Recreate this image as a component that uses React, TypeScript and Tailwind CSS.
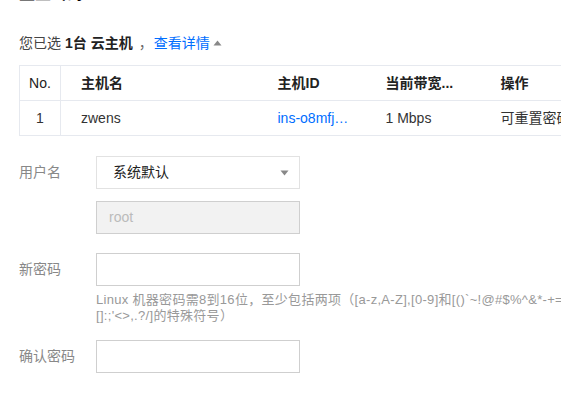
import React from "react";

const font = { fontFamily: '"Liberation Sans", "Noto Sans CJK SC", sans-serif' };

export default function App() {
  return (
    <div className="w-[561px] h-[420px] overflow-hidden bg-white text-[#333]" style={font}>
      <div className="pl-[19px]">
        <h3 className="-mt-[16px] h-[20px] text-[16px] leading-[20px] font-bold text-[#000]">重置密码</h3>

        <div className="mt-[29px] flex items-center text-[14px] leading-[20px]">
          <span className="text-[#444]">您已选</span>
          <span className="ml-[4px] font-bold text-[#222]">1台 云主机</span>
          <span className="ml-[6px] text-[#666]">，</span>
          <span className="ml-[1px] text-[#006eff]">查看详情</span>
          <svg className="ml-[3px]" width="9" height="6" viewBox="0 0 9 6">
            <path d="M4.5 0.5 L8.5 5.5 L0.5 5.5 Z" fill="#888" />
          </svg>
        </div>

        <table className="mt-[12px] w-[640px] table-fixed border-collapse border border-[#e6e9ef] text-[14px]">
          <colgroup>
            <col className="w-[41px]" />
            <col className="w-[198px]" />
            <col className="w-[108px]" />
            <col className="w-[115px]" />
            <col />
          </colgroup>
          <thead>
            <tr className="h-[35px] text-[#222]">
              <th className="border-r border-[#e6e9ef] text-center font-normal">No.</th>
              <th className="pl-[20px] text-left font-semibold">主机名</th>
              <th className="pl-[19px] text-left font-semibold">主机ID</th>
              <th className="pl-[19px] text-left font-semibold">当前带宽...</th>
              <th className="pl-[19px] text-left font-semibold">操作</th>
            </tr>
          </thead>
          <tbody>
            <tr className="h-[35px] border-t border-[#e6e9ef]">
              <td className="border-r border-[#e6e9ef] text-center">1</td>
              <td className="pl-[20px]">zwens</td>
              <td className="pl-[19px] text-[#006eff] whitespace-nowrap overflow-hidden">ins-o8mfj…</td>
              <td className="pl-[19px]">1 Mbps</td>
              <td className="pl-[19px] whitespace-nowrap">可重置密码</td>
            </tr>
          </tbody>
        </table>

        <div className="mt-[20px] flex flex-col text-[14px]">
          <div className="flex items-center">
            <label className="w-[77px] text-[#888]">用户名</label>
            <div className="w-[204px] h-[33px] border border-[#e2e2e2] flex items-center justify-between pl-[16px] pr-[10px] text-[#222]">
              <span>系统默认</span>
              <svg width="9" height="6" viewBox="0 0 9 6">
                <path d="M0.5 0.5 L8.5 0.5 L4.5 5.5 Z" fill="#888" />
              </svg>
            </div>
          </div>

          <div className="mt-[12px] flex items-center">
            <div className="w-[77px]" />
            <div className="w-[204px] h-[33px] border border-[#cfcfcf] bg-[#f2f2f2] flex items-center pl-[12px] text-[#bbb]">
              root
            </div>
          </div>

          <div className="mt-[19px] flex items-center">
            <label className="w-[77px] text-[#888]">新密码</label>
            <div className="w-[204px] h-[33px] border border-[#cfcfcf] bg-white" />
          </div>

          <div className="mt-[6px] pl-[77px] w-[700px] text-[13px] leading-[16px] tracking-[0.3px] text-[#999] whitespace-nowrap">
            Linux 机器密码需8到16位，至少包括两项（[a-z,A-Z],[0-9]和[()`~!@#$%^&*-+=|{}
            <br />
            []:;'&lt;&gt;,.?/]的特殊符号）
          </div>

          <div className="mt-[16px] flex items-center">
            <label className="w-[77px] text-[#888]">确认密码</label>
            <div className="w-[204px] h-[33px] border border-[#cfcfcf] bg-white" />
          </div>
        </div>
      </div>
    </div>
  );
}
